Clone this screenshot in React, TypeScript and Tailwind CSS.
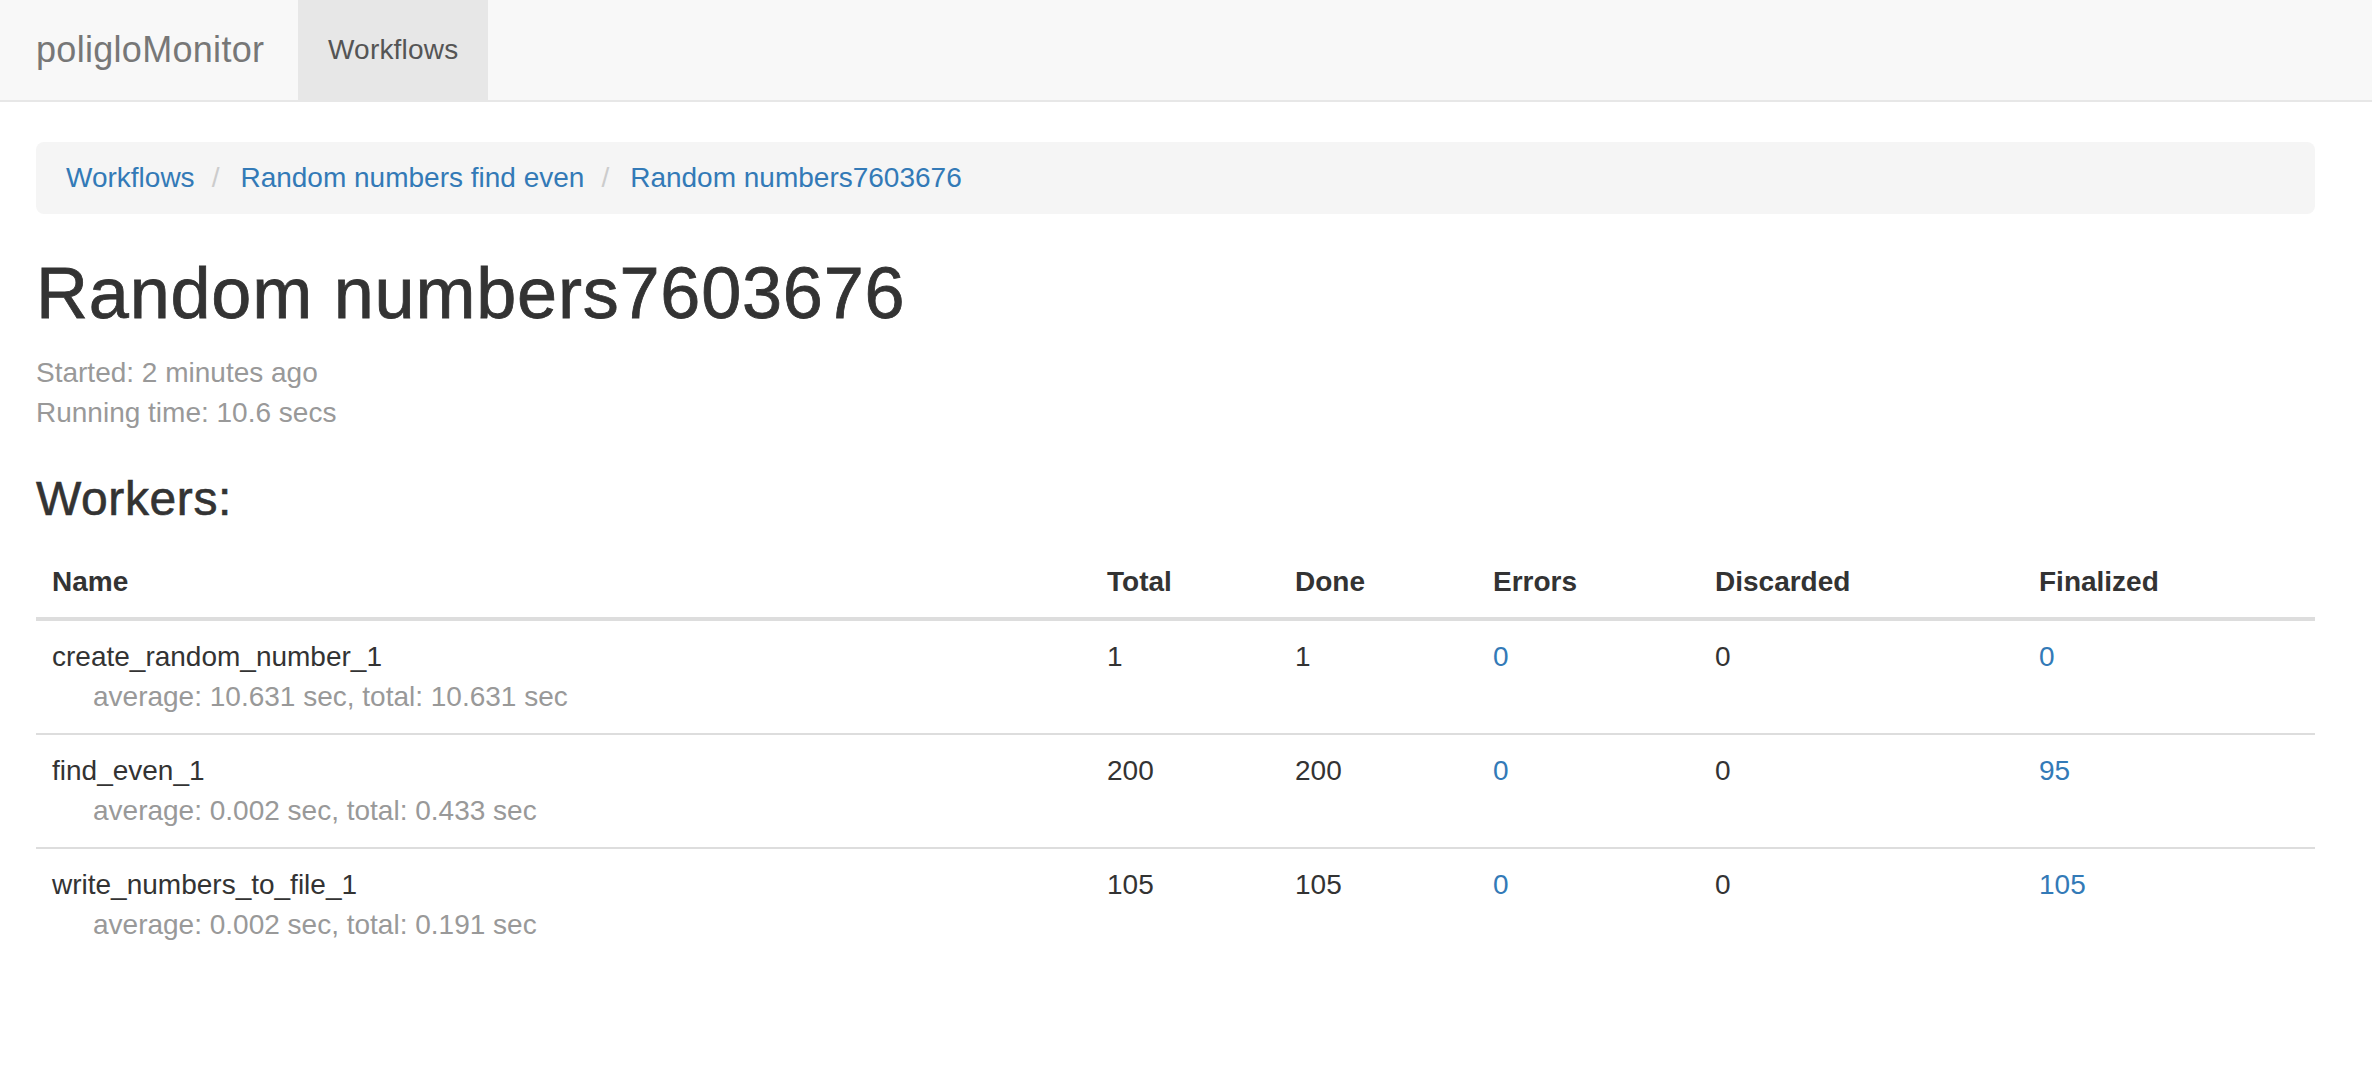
import React from 'react';

interface Worker {
  name: string;
  average: string;
  total: string;
  count: number;
  done: number;
  errors: number;
  discarded: number;
  finalized: number;
}

const workers: Worker[] = [
  { name: 'create_random_number_1', average: '10.631', total: '10.631', count: 1, done: 1, errors: 0, discarded: 0, finalized: 0 },
  { name: 'find_even_1', average: '0.002', total: '0.433', count: 200, done: 200, errors: 0, discarded: 0, finalized: 95 },
  { name: 'write_numbers_to_file_1', average: '0.002', total: '0.191', count: 105, done: 105, errors: 0, discarded: 0, finalized: 105 },
];

const crumbs = ['Workflows', 'Random numbers find even', 'Random numbers7603676'];

const App: React.FC = () => {
  return (
    <div className="min-h-screen bg-white text-[#333] font-['Liberation_Sans',Arial,sans-serif] text-[28px] leading-[40px]">
      {/* Navbar */}
      <nav className="h-[102px] bg-[#f8f8f8] border-b-2 border-[#e7e7e7] flex">
        <a href="#" className="w-[298px] pl-[36px] py-[30px] text-[36px] leading-[40px] text-[#777] tracking-[0.3px]">
          poligloMonitor
        </a>
        <a href="#" className="px-[30px] py-[30px] h-[100px] w-[190px] bg-[#e7e7e7] text-[#555] tracking-[0.2px]">
          Workflows
        </a>
      </nav>

      <div className="pl-[36px] pr-[57px] pt-[40px]">
        {/* Breadcrumb */}
        <ol className="flex items-center bg-[#f5f5f5] rounded-[8px] px-[30px] py-[16px]">
          {crumbs.map((c, i) => (
            <li key={c} className="flex items-center">
              {i > 0 && <span className="pl-[17px] pr-[21px] text-[#ccc]">/</span>}
              <a href="#" className="text-[#337ab7]">{c}</a>
            </li>
          ))}
        </ol>

        <h1 className="mt-[40px] mb-[20px] text-[72px] leading-[1.1] font-normal tracking-[0.8px] [-webkit-text-stroke:0.8px_#333]">
          Random numbers7603676
        </h1>
        <div className="text-[#999]">
          <div>Started: 2 minutes ago</div>
          <div>Running time: 10.6 secs</div>
        </div>

        <h3 className="mt-[40px] mb-[20px] text-[48px] leading-[1.1] font-normal tracking-[0.6px] [-webkit-text-stroke:0.6px_#333]">
          Workers:
        </h3>

        <table className="w-full border-collapse text-left">
          <thead>
            <tr className="border-b-4 border-[#ddd]">
              <th className="w-[1055px] px-[16px] pt-[16px] pb-[15px] font-bold">Name</th>
              <th className="w-[188px] px-[16px] pt-[16px] pb-[15px] font-bold">Total</th>
              <th className="w-[198px] px-[16px] pt-[16px] pb-[15px] font-bold">Done</th>
              <th className="w-[222px] px-[16px] pt-[16px] pb-[15px] font-bold">Errors</th>
              <th className="w-[324px] px-[16px] pt-[16px] pb-[15px] font-bold">Discarded</th>
              <th className="px-[16px] pt-[16px] pb-[15px] font-bold">Finalized</th>
            </tr>
          </thead>
          <tbody>
            {workers.map((w, i) => (
              <tr key={w.name} className={i < workers.length - 1 ? 'border-b-2 border-[#ddd]' : ''}>
                <td className="p-[16px] align-top">
                  <div>{w.name}</div>
                  <div className="pl-[41px] text-[#999]">
                    average: {w.average} sec, total: {w.total} sec
                  </div>
                </td>
                <td className="p-[16px] align-top">{w.count}</td>
                <td className="p-[16px] align-top">{w.done}</td>
                <td className="p-[16px] align-top">
                  <a href="#" className="text-[#337ab7]">{w.errors}</a>
                </td>
                <td className="p-[16px] align-top">{w.discarded}</td>
                <td className="p-[16px] align-top">
                  <a href="#" className="text-[#337ab7]">{w.finalized}</a>
                </td>
              </tr>
            ))}
          </tbody>
        </table>
      </div>
    </div>
  );
};

export default App;
